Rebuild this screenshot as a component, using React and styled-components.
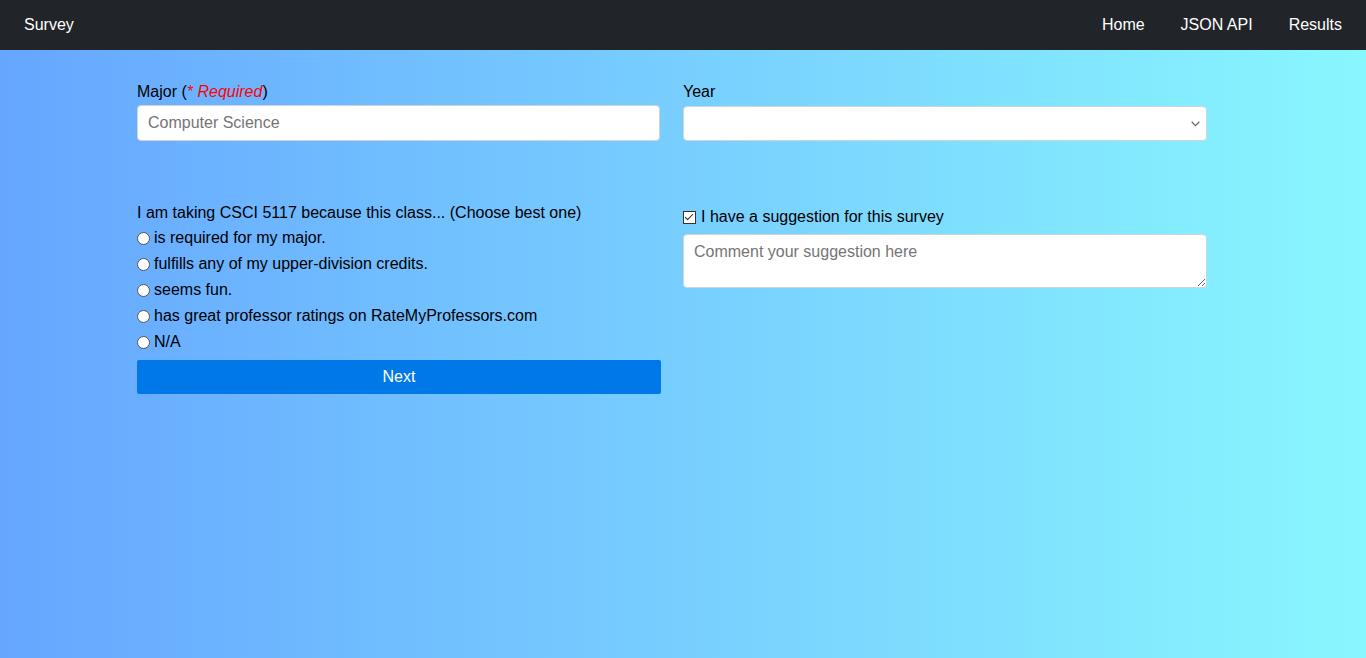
import styled, { createGlobalStyle } from "styled-components"

const GlobalStyle = createGlobalStyle`
  html, body {
    margin: 0;
    padding: 0;
  }
  body {
    font-family: "Liberation Sans", Arial, sans-serif;
    font-size: 16px;
    color: #000;
  }
`

// options for the reason question
const reasons = [
  "is required for my major.",
  "fulfills any of my upper-division credits.",
  "seems fun.",
  "has great professor ratings on RateMyProfessors.com",
  "N/A",
]

function App() {
  return (
    <Page>
      <GlobalStyle />
      <NavBar>
        <Brand href="#">Survey</Brand>
        <NavLinks>
          <NavLink href="#">Home</NavLink>
          <NavLink href="#">JSON API</NavLink>
          <NavLink href="#">Results</NavLink>
        </NavLinks>
      </NavBar>

      <Main>
        <FormGrid>
          <Field>
            <Label>
              Major (<Required>* Required</Required>)
            </Label>
            <TextInput type="text" placeholder="Computer Science" />
          </Field>
          <Field>
            <Label>Year</Label>
            <SelectWrap>
              <Select defaultValue="">
                <option value=""></option>
                <option>Freshman</option>
                <option>Sophomore</option>
                <option>Junior</option>
                <option>Senior</option>
                <option>Graduate</option>
              </Select>
              {/* small chevron drawn over the select */}
              <Chevron width="9" height="6" viewBox="0 0 9 6">
                <path d="M0.7 0.8 L4.5 4.6 L8.3 0.8" fill="none" stroke="#6b6b6b" strokeWidth="1.3" />
              </Chevron>
            </SelectWrap>
          </Field>

          <Field>
            <Question>I am taking CSCI 5117 because this class... (Choose best one)</Question>
            {reasons.map((reason) => (
              <RadioRow key={reason}>
                <input type="radio" name="reason" />
                {reason}
              </RadioRow>
            ))}
            <NextButton type="button">Next</NextButton>
          </Field>
          <Field $offset>
            <CheckRow>
              <input type="checkbox" defaultChecked />
              I have a suggestion for this survey
            </CheckRow>
            <TextArea placeholder="Comment your suggestion here" />
          </Field>
        </FormGrid>
      </Main>
    </Page>
  )
}

const Page = styled.div`
  min-height: 100vh;
  display: flex;
  flex-direction: column;
  background: linear-gradient(to right, #66a6ff 0%, #89f7fe 100%);
`

const NavBar = styled.nav`
  height: 50px;
  background: #212529;
  display: flex;
  align-items: center;
  justify-content: space-between;
  padding: 0 24px;
  box-sizing: border-box;
`

const Brand = styled.a`
  color: #fff;
  text-decoration: none;
  font-size: 16px;
`

const NavLinks = styled.div`
  display: flex;
  gap: 36px;
`

const NavLink = styled.a`
  color: #fff;
  text-decoration: none;
  font-size: 16px;
`

const Main = styled.main`
  flex: 1;
  padding: 30px 0 0 137px;
`

const FormGrid = styled.div`
  display: grid;
  grid-template-columns: 524px 524px;
  column-gap: 22px;
  row-gap: 59px;
  align-items: start;
`

const Field = styled.div`
  display: flex;
  flex-direction: column;
  padding-top: ${(p) => (p.$offset ? "5px" : "0")};
`

const Label = styled.label`
  line-height: 24px;
  margin-bottom: 1px;
`

const Required = styled.span`
  color: #ff0000;
  font-style: italic;
`

const inputBase = `
  box-sizing: border-box;
  width: 523px;
  border: 1px solid #ced4da;
  border-radius: 4px;
  background: #fff;
  font-family: "Liberation Sans", Arial, sans-serif;
  font-size: 16px;
  color: #495057;
  outline: none;
  &::placeholder {
    color: #757575;
  }
`

const TextInput = styled.input`
  ${inputBase}
  height: 36px;
  padding: 0 10px;
`

const SelectWrap = styled.div`
  position: relative;
  width: 524px;
  margin-top: 1px;
`

const Select = styled.select`
  ${inputBase}
  appearance: none;
  width: 524px;
  height: 35px;
  padding: 0 8px;
`

const Chevron = styled.svg`
  position: absolute;
  right: 7px;
  top: 15px;
  pointer-events: none;
`

const Question = styled.div`
  line-height: 25px;
`

const RadioRow = styled.label`
  display: flex;
  align-items: center;
  height: 26px;
  line-height: 26px;

  input {
    appearance: none;
    box-sizing: border-box;
    width: 13px;
    height: 13px;
    margin: 0 4px 0 0;
    border: 1px solid #555;
    border-radius: 50%;
    background: #fff;
  }
`

const NextButton = styled.button`
  margin-top: 5px;
  height: 34px;
  width: 524px;
  border: none;
  border-radius: 2px;
  background: #0078e8;
  color: #fff;
  font-family: "Liberation Sans", Arial, sans-serif;
  font-size: 16px;
  cursor: pointer;
`

const CheckRow = styled.label`
  display: flex;
  align-items: center;
  line-height: 24px;

  input {
    appearance: none;
    position: relative;
    box-sizing: border-box;
    width: 13px;
    height: 13px;
    margin: 0 5px 0 0;
    border: 1px solid #333;
    background: #fff;
  }

  input:checked::after {
    content: "";
    position: absolute;
    left: 3px;
    top: 0px;
    width: 3px;
    height: 7px;
    border: solid #222;
    border-width: 0 1.5px 1.5px 0;
    transform: rotate(45deg);
  }
`

const TextArea = styled.textarea`
  ${inputBase}
  width: 524px;
  height: 54px;
  margin-top: 5px;
  padding: 8px 10px;
  resize: vertical;
`

export default App
